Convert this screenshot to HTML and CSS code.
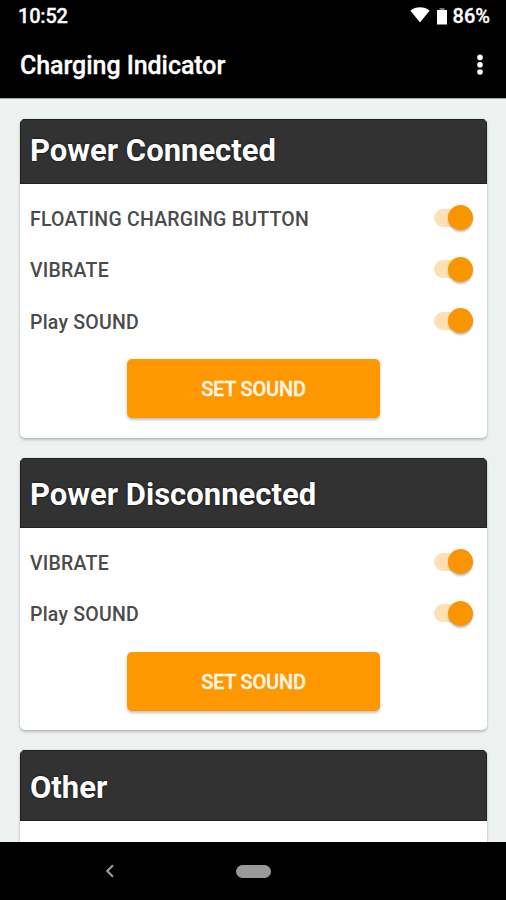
FILE: index.html
```html
<!DOCTYPE html>
<html lang="en">
<head>
<meta charset="utf-8">
<title>Charging Indicator</title>
<link rel="stylesheet" href="styles.css">
</head>
<body>
<div class="screen">
  <header class="top">
    <div class="status">
      <span class="clock">10:52</span>
      <div class="indicators">
        <svg class="wifi" width="20" height="16" viewBox="0 0 20 16"><path d="M.3 3.6C5.8-.9 14.2-.9 19.7 3.6L10 15.4Z" fill="#fff"/></svg>
        <svg class="battery" width="12" height="17" viewBox="0 0 12 17"><path d="M3.5 0h5v2h-5z" fill="#777"/><path d="M1 2h10v14.5H1z" fill="#fff"/></svg>
        <span class="percent">86%</span>
      </div>
    </div>
    <div class="appbar">
      <h1>Charging Indicator</h1>
      <svg class="more" width="6" height="22" viewBox="0 0 6 22" fill="#fff"><circle cx="3" cy="3.4" r="2.8"/><circle cx="3" cy="10.7" r="2.8"/><circle cx="3" cy="18" r="2.8"/></svg>
    </div>
  </header>
  <main class="content">
    <section class="card first">
      <h2>Power Connected</h2>
      <div class="rows">
        <div class="row"><span class="label">FLOATING CHARGING BUTTON</span><span class="switch"></span></div>
        <div class="row"><span class="label">VIBRATE</span><span class="switch"></span></div>
        <div class="row"><span class="label">Play SOUND</span><span class="switch"></span></div>
      </div>
      <button class="button">SET SOUND</button>
    </section>
    <section class="card second">
      <h2>Power Disconnected</h2>
      <div class="rows">
        <div class="row"><span class="label">VIBRATE</span><span class="switch"></span></div>
        <div class="row"><span class="label">Play SOUND</span><span class="switch"></span></div>
      </div>
      <button class="button">SET SOUND</button>
    </section>
    <section class="card third">
      <h2>Other</h2>
    </section>
  </main>
  <nav class="nav">
    <svg class="back" width="10" height="14" viewBox="0 0 10 14"><path d="M8 1.2 2.3 7 8 12.8" fill="none" stroke="#999" stroke-width="2.2"/></svg>
    <span class="home"></span>
  </nav>
</div>
</body>
</html>
```

FILE: styles.css
```css
* { box-sizing: border-box; }
body { margin: 0; font-family: Roboto, "Liberation Sans", sans-serif; }
.screen { width: 506px; height: 900px; display: flex; flex-direction: column; overflow: hidden; background: #edf1f0; }
.top { height: 98px; flex: none; background: #000; color: #fff; box-shadow: 0 1px 0 #aaa5a6; }
.status { height: 33px; display: flex; justify-content: space-between; align-items: center; padding: 0 16px 0 18px; font-size: 20px; font-weight: 500; line-height: 33px; -webkit-text-stroke: .3px #fff; }
.clock { letter-spacing: -.2px; }
.indicators { display: flex; align-items: center; }
.wifi { margin-right: 6px; margin-top: -3px; }
.battery { margin-right: 5px; margin-top: -1px; }
.appbar { height: 65px; display: flex; justify-content: space-between; align-items: center; padding: 0 23px 0 20px; }
.more { margin-top: -2px; }
.appbar h1 { margin: 0; font-size: 25px; font-weight: 500; line-height: 65px; letter-spacing: -.05px; -webkit-text-stroke: .3px #fff; }
.content { flex: 1; min-height: 0; overflow: hidden; padding: 21px 19px 0 20px; display: flex; flex-direction: column; gap: 20px; }
.card { flex: none; background: #fff; border-radius: 5px; overflow: hidden; box-shadow: 0 2px 3px rgba(0,0,0,.2), 0 0 2px rgba(0,0,0,.12); }
.card h2 { margin: 0; height: 70px; padding: 3px 10px 0; background: #323232; color: #fff; font-size: 31px; line-height: 68px; font-weight: 700; box-shadow: inset 0 0 0 1px #222; text-shadow: 0 0 2px #000; }
.card.first h2 { height: 65px; padding-top: 0; line-height: 64px; }
.card.third h2 { height: 71px; padding-top: 4px; }
.first { height: 319px; }
.second, .third { height: 272px; }
.rows { padding: 8px 14px 8px 10px; }
.row { height: 51.6px; display: flex; align-items: center; justify-content: space-between; }
.label { padding-top: 3px; font-size: 19.5px; font-weight: 500; letter-spacing: .22px; color: #4b4b4b; }
.switch { width: 39px; height: 26px; display: flex; align-items: center; justify-content: flex-end; }
.switch::before { content: ""; width: 100%; height: 18px; margin-right: -25px; border-radius: 9px; background: #ffe0b5; }
.switch::after { content: ""; flex: none; width: 25px; height: 25px; border-radius: 50%; background: #f99500; box-shadow: 0 2px 2px rgba(0,0,0,.25); z-index: 1; }
.button { display: block; width: 253px; height: 59px; margin: 4px 0 0 107px; padding: 2px 0 0; border: 0; border-radius: 5px; background: #ff9800; color: #fff6e8; font: 500 20px/57px Roboto, sans-serif; letter-spacing: -.2px; -webkit-text-stroke: .3px #fff6e8; box-shadow: 0 2px 3px rgba(0,0,0,.25); }
.second .button { margin-top: 5px; }
.nav { height: 58px; flex: none; display: flex; align-items: center; background: #000; padding-left: 105px; }
.home { width: 35px; height: 13px; margin-left: 121px; border-radius: 7px; background: #999; }
```
